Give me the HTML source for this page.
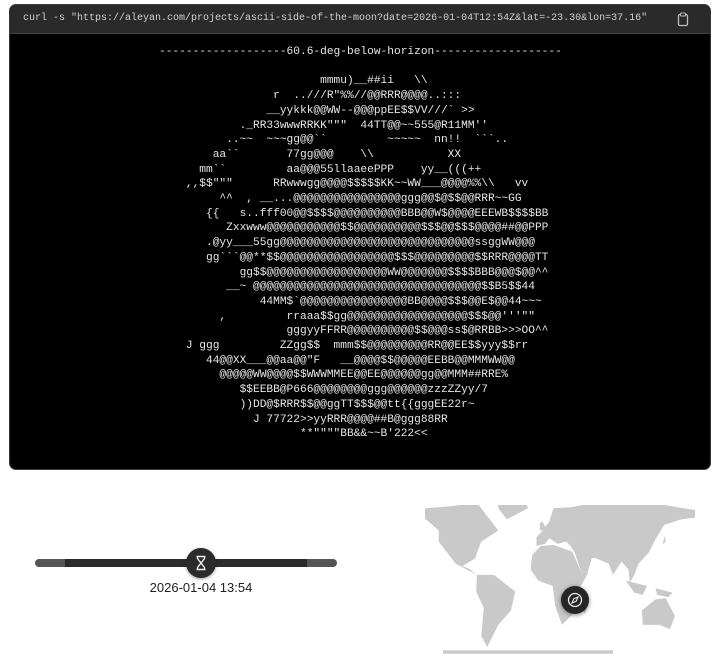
<!DOCTYPE html>
<html><head><meta charset="utf-8"><style>
body{margin:0;width:720px;height:658px;background:#fff;position:relative;overflow:hidden;font-family:"Liberation Sans",sans-serif}
.term{position:absolute;left:9px;top:4px;width:700px;height:464px;background:#000;border:1px solid #3a3a3a;border-radius:7px;overflow:hidden}
.hdr{position:absolute;left:0;top:0;right:0;height:28px;background:#2a2a2a;border-bottom:1px solid #444}
.cmd{position:absolute;left:13px;top:8px;font:10px "Liberation Mono",monospace;color:#d0d0d0;white-space:pre}
pre{position:absolute;left:149px;top:40px;margin:0;font:11.2px/14.7px "Liberation Mono",monospace;color:#e6e6e6}
.track{position:absolute;left:35px;top:559px;width:302px;height:8px;border-radius:4px;background:linear-gradient(90deg,#555 0,#555 30px,#2b2b2b 30px,#2b2b2b 272px,#555 272px)}
.knob{position:absolute;left:186px;top:548px;width:30px;height:30px;border-radius:50%;background:#2b2b2b;box-shadow:0 1px 3px rgba(0,0,0,.4)}
.date{position:absolute;left:101px;width:200px;top:580px;text-align:center;font-size:13px;color:#222}
.comp{position:absolute;left:561px;top:586px;width:28px;height:28px;border-radius:50%;background:#262626;box-shadow:0 1px 4px rgba(0,0,0,.5)}
</style></head><body>
<div class="term"><div class="hdr"><div class="cmd">curl -s "https://aleyan.com/projects/ascii-side-of-the-moon?date=2026-01-04T12:54Z&amp;lat=-23.30&amp;lon=37.16"</div>
<svg style="position:absolute;left:667px;top:7px" width="12" height="15" viewBox="0 0 12 15"><rect x="1.5" y="2.5" width="9" height="11" rx="1.5" fill="none" stroke="#bbb" stroke-width="1.3"/><rect x="3.5" y="1" width="5" height="3" rx="1" fill="#2a2a2a" stroke="#bbb" stroke-width="1.1"/></svg></div>
<pre>-------------------60.6-deg-below-horizon-------------------

                        mmmu)__##ii   \\
                 r  ..///R"%%//@@RRR@@@@..:::
                __yykkk@@WW--@@@ppEE$$VV///&#96; &gt;&gt;
            ._RR33wwwRRKK"""  44TT@@~~555@R11MM''
          ..~~  ~~~gg@@&#96;&#96;         ~~~~~  nn!!  &#96;&#96;&#96;..
        aa&#96;&#96;       77gg@@@    \\           XX
      mm&#96;&#96;         aa@@@55llaaeePPP    yy__(((++
    ,,$$"""      RRwwwgg@@@@$$$$$KK~~WW___@@@@%%\\   vv
         ^^  , __...@@@@@@@@@@@@@@@@ggg@@$@$$@@RRR~~GG
       {{   s..fff00@@$$$$@@@@@@@@@@BBB@@W$@@@@EEEWB$$$$BB
          Zxxwww@@@@@@@@@@@$$@@@@@@@@@@$$$@@$$$@@@@##@@PPP
       .@yy___55gg@@@@@@@@@@@@@@@@@@@@@@@@@@@@@ssggWW@@@
       gg&#96;&#96;&#96;@@**$$@@@@@@@@@@@@@@@@@$$$@@@@@@@@@$$RRR@@@@TT
            gg$$@@@@@@@@@@@@@@@@@@WW@@@@@@@$$$$BBB@@@$@@^^
          __~ @@@@@@@@@@@@@@@@@@@@@@@@@@@@@@@@@@$$B5$$44
               44MM$&#96;@@@@@@@@@@@@@@@@BB@@@@$$$@@E$@@44~~~
         ,         rraaa$$gg@@@@@@@@@@@@@@@@@@$$$@@'''""
                   gggyyFFRR@@@@@@@@@@$$@@@ss$@RRBB&gt;&gt;&gt;OO^^
    J ggg         ZZgg$$  mmm$$@@@@@@@@@RR@@EE$$yyy$$rr
       44@@XX___@@aa@@"F   __@@@@$$@@@@@EEBB@@MMMWW@@
         @@@@@WW@@@@$$WWWMMEE@@EE@@@@@@gg@@MMM##RRE%
            $$EEBB@P666@@@@@@@@ggg@@@@@@zzzZZyy/7
            ))DD@$RRR$$@@ggTT$$$@@tt{{gggEE22r~
              J 77722&gt;&gt;yyRRR@@@@##B@ggg88RR
                     **""""BB&amp;&amp;~~B'222&lt;&lt;</pre>
</div>
<div class="track"></div>
<div class="knob"><svg width="30" height="30" viewBox="0 0 30 30"><path d="M10.5 8.5h9M10.5 21.5h9M11.5 8.5v2l7 9v2M18.5 8.5v2l-7 9v2" fill="none" stroke="#eee" stroke-width="1.4"/></svg></div>
<div class="date">2026-01-04 13:54</div>
<svg style="position:absolute;left:0;top:0" width="720" height="658"><defs><clipPath id="c"><rect x="425" y="505" width="270" height="153"/></clipPath></defs>
<g clip-path="url(#c)"><g transform="translate(545,586) scale(0.85,-1.11)" fill="#c9c9c9">
<polygon points="-165,68 -140,70 -110,72 -80,75 -65,60 -55,50 -75,40 -80,30 -82,25 -97,18 -88,15 -78,8 -85,12 -105,20 -115,30 -125,40 -125,50 -140,60 -165,60"/>
<polygon points="-55,82 -25,82 -20,70 -45,60 -55,70"/>
<polygon points="-80,10 -60,10 -35,-5 -40,-22 -55,-35 -68,-55 -75,-45 -72,-20 -81,-5"/>
<polygon points="-10,36 -10,44 -5,48 5,58 10,70 30,71 60,75 100,78 140,73 180,68 180,62 160,60 140,55 130,42 122,30 110,20 105,10 100,3 98,15 90,22 80,10 75,20 60,25 55,25 50,12 43,12 35,30 30,36 25,40 15,38 5,43 0,38"/>
<polygon points="-17,15 -15,28 -5,36 10,37 32,31 43,12 51,12 40,-3 40,-15 33,-25 20,-35 12,-18 9,0 -8,5"/>
<polygon points="44,-13 50,-15 47,-25 44,-22"/>
<polygon points="114,-22 130,-12 142,-11 153,-27 147,-39 135,-35 115,-35"/>
<polygon points="-6,50 2,51 -3,58 -6,57"/><polygon points="130,31 142,40 141,45 138,37"/>
<polygon points="95,5 105,-6 115,-8 120,0 110,2"/><polygon points="130,-2 150,-6 145,-10 132,-8"/>
<polygon points="-120,-58 80,-58 80,-61 -120,-61"/>
</g></g></svg>
<div class="comp"><svg width="28" height="28" viewBox="0 0 28 28"><circle cx="14" cy="14" r="6.5" fill="none" stroke="#eee" stroke-width="1.3"/><path d="M17 11l-1.8 4.2L11 17l1.8-4.2z" fill="none" stroke="#eee" stroke-width="1.1"/></svg></div>
</body></html>
